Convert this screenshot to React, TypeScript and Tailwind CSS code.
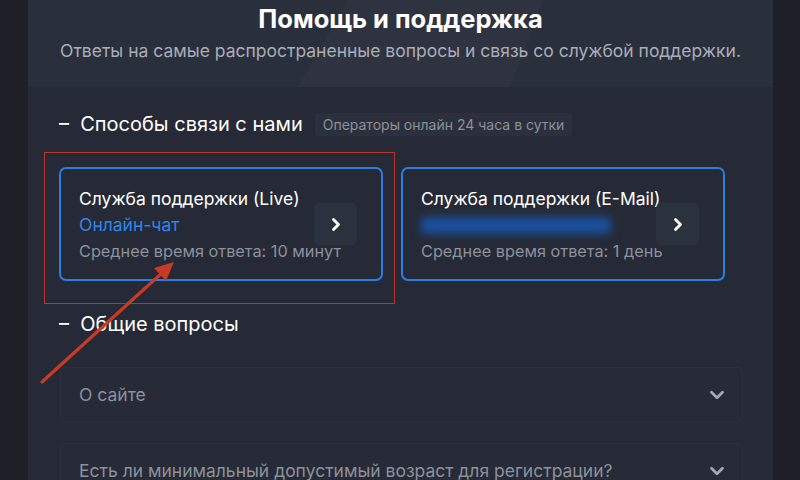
import { ChevronRight, ChevronDown } from 'lucide-react';

const font = { fontFamily: 'Inter, "Noto Sans", sans-serif' };

function ContactCard({ title, sub, time, blurred }: { title: string; sub?: string; time: string; blurred?: boolean }) {
  return (
    <div className="relative w-[324px] h-[114px] rounded-[7px] border-2 border-[#2a7de1] bg-[#252a36] px-[18px] py-[17px] overflow-hidden">
      <div className="text-[17.5px] leading-[26px] text-white whitespace-nowrap">{title}</div>
      {blurred ? (
        <div className="h-[26px] flex items-center">
          <div className="w-[190px] h-[17px] rounded bg-[#1b4f9e] blur-[4px]" />
        </div>
      ) : (
        <div className="text-[17.5px] leading-[26px] text-[#2f86eb]">{sub}</div>
      )}
      <div className="text-[16.3px] leading-[26px] text-[#8c919c] whitespace-nowrap">{time}</div>
      <button className="absolute right-[24px] top-1/2 -translate-y-1/2 w-[43px] h-[43px] rounded-md bg-[#2c313e] flex items-center justify-center">
        <ChevronRight size={20} strokeWidth={3.4} className="text-white" />
      </button>
    </div>
  );
}

function FaqItem({ text }: { text: string }) {
  return (
    <div className="h-[56px] shrink-0 rounded-md border border-[#2c3140] bg-[#262b37] flex items-center justify-between pl-[18px] pr-[14px]">
      <span className="text-[17.5px] text-[#8c919c]">{text}</span>
      <ChevronDown size={22} strokeWidth={3} className="text-[#a3a8b3]" />
    </div>
  );
}

export default function App() {
  return (
    <div className="relative w-[800px] h-[480px] bg-[#1e2029] flex overflow-hidden" style={font}>
      <div className="w-[28px] shrink-0" />
      <div className="w-[745px] shrink-0 bg-[#252a36] flex flex-col">
        {/* Header */}
        <div className="relative h-[87px] shrink-0 bg-[#2a2f3c] overflow-hidden">
          <div
            className="absolute inset-0 bg-white/[0.025]"
            style={{ clipPath: 'polygon(270px 100%, 320px 0, 515px 0, 482px 100%)' }}
          />
          <div className="relative flex flex-col items-center pt-[3px]">
            <h1 className="text-[25.5px] leading-[32px] font-bold text-white">Помощь и поддержка</h1>
            <p className="mt-[4px] text-[17.5px] leading-[24px] text-[#a9aeb8]">
              Ответы на самые распространенные вопросы и связь со службой поддержки.
            </p>
          </div>
        </div>

        {/* Body */}
        <div className="shrink-0 pl-[31px] pr-[30px] pt-[23px]">
          <div className="flex items-center h-[28px]">
            <span className="text-[20px] text-white">–&nbsp;&nbsp;Способы связи с нами</span>
            <span className="ml-[12px] h-[23px] px-[8px] flex items-center rounded-[3px] bg-[#2b303c] text-[14px] text-[#8b909b]">
              Операторы онлайн 24 часа в сутки
            </span>
          </div>

          <div className="mt-[29px] flex gap-[18px]">
            <ContactCard title="Служба поддержки (Live)" sub="Онлайн-чат" time="Среднее время ответа: 10 минут" />
            <ContactCard title="Служба поддержки (E-Mail)" blurred time="Среднее время ответа: 1 день" />
          </div>

          <div className="mt-[29px] h-[28px] flex items-center">
            <span className="text-[20px] text-white">–&nbsp;&nbsp;Общие вопросы</span>
          </div>

          <div className="mt-[29px] ml-[1px] flex flex-col gap-[20px]">
            <FaqItem text="О сайте" />
            <FaqItem text="Есть ли минимальный допустимый возраст для регистрации?" />
          </div>
        </div>
      </div>

      {/* Annotation overlay */}
      <div className="absolute left-[44px] top-[152px] w-[351px] h-[152px] border-[1.5px] border-[#b8352a]" />
      <svg className="absolute left-0 top-0" width="800" height="480" viewBox="0 0 800 480">
        <line x1="42" y1="382" x2="163" y2="272" stroke="#c73a26" strokeWidth="3.2" strokeLinecap="round" />
        <polygon points="174,262 154,268 166,281" fill="#c73a26" />
      </svg>
    </div>
  );
}
